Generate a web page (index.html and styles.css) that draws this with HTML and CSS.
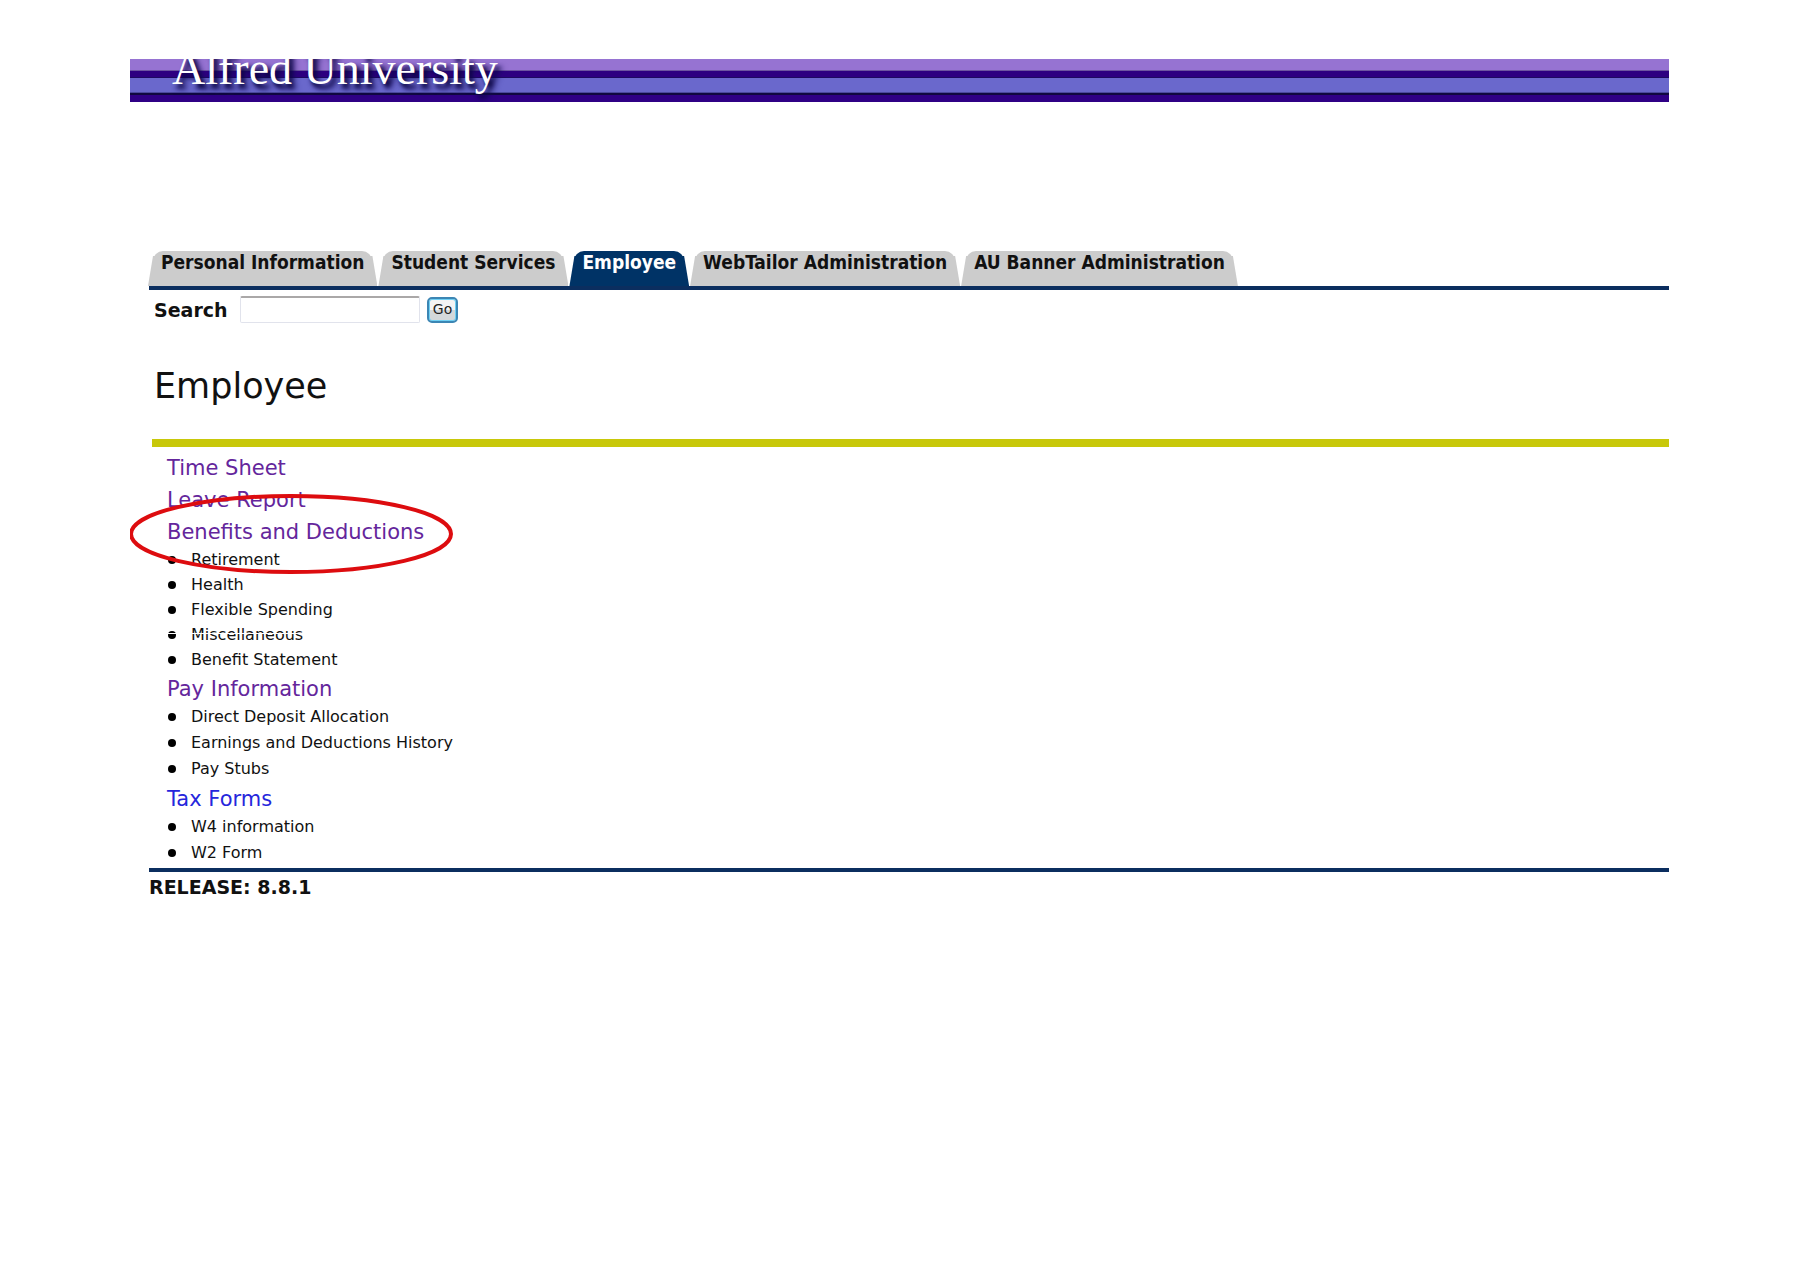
FILE: index.html
```html
<!DOCTYPE html>
<html lang="en">
<head>
<meta charset="utf-8">
<title>Employee - Alfred University</title>
<link rel="stylesheet" href="styles.css">
</head>
<body>
<header class="banner"><span class="wordmark">Alfred University</span></header>
<div class="content">
  <nav class="tabs" aria-label="Main">
    <a class="tab" href="#">Personal Information</a>
    <a class="tab" href="#">Student Services</a>
    <a class="tab tab-active" href="#" aria-current="page">Employee</a>
    <a class="tab" href="#">WebTailor Administration</a>
    <a class="tab" href="#">AU Banner Administration</a>
  </nav>
  <form class="search">
    <label for="q">Search</label>
    <input id="q" type="text">
    <button type="button">Go</button>
  </form>
  <main>
    <h1>Employee</h1>
    <div class="menu">
      <a class="menu-link" href="#">Time Sheet</a>
      <a class="menu-link" href="#">Leave Report</a>
      <div class="highlighted">
        <a class="menu-link" href="#">Benefits and Deductions</a>
        <svg class="ring" width="326" height="84" viewBox="0 0 326 84" aria-hidden="true"><ellipse cx="163" cy="42" rx="160" ry="38" fill="none" stroke="#dd0c0f" stroke-width="4"/></svg>
      </div>
      <ul class="compact">
        <li>Retirement</li>
        <li>Health</li>
        <li>Flexible Spending</li>
        <li class="scanned">Miscellaneous</li>
        <li>Benefit Statement</li>
      </ul>
      <a class="menu-link" href="#">Pay Information</a>
      <ul>
        <li>Direct Deposit Allocation</li>
        <li>Earnings and Deductions History</li>
        <li>Pay Stubs</li>
      </ul>
      <a class="menu-link unvisited" href="#">Tax Forms</a>
      <ul>
        <li>W4 information</li>
        <li>W2 Form</li>
      </ul>
    </div>
  </main>
  <footer>RELEASE: 8.8.1</footer>
</div>
</body>
</html>
```
FILE: styles.css
```css
* { box-sizing: border-box; }
body {
  margin: 59px 131px 0 130px;
  background: #fff;
  color: #111;
  font-family: "DejaVu Sans", Verdana, sans-serif;
}
a { text-decoration: none; }

.banner {
  height: 43px;
  overflow: hidden;
  padding-left: 42px;
  background: linear-gradient(#9673d2 0 11px, #6c55a0 11px 12px, #2d0080 12px 18px, #1e0a60 18px 19px, #6a68cc 19px 33px, #4a4a9c 33px 34px, #100840 34px 36px, #2f0085 36px);
}
.wordmark {
  display: block;
  margin-top: -15px;
  font: 46px/50px "Liberation Serif", serif;
  color: #fff;
  text-shadow: 3px 4px 4px #0a0440, 5px 5px 6px #1a1060;
}

.content { padding: 149px 0 0 19px; }
.tabs {
  display: flex;
  gap: 3px;
  border-bottom: 4px solid #0b2e5f;
}
.tab {
  position: relative;
  z-index: 0;
  height: 35px;
  padding: 0 12px;
  font: bold 19px/22px "DejaVu Sans Condensed", "DejaVu Sans", sans-serif;
  color: #111;
}
.tab::before {
  content: "";
  position: absolute;
  z-index: -1;
  inset: 0 4px;
  background: #ccc;
  border-radius: 10px 10px 0 0;
}
.tab::after {
  content: "";
  position: absolute;
  z-index: -1;
  inset: 5px -1px 0;
  background: #ccc;
  clip-path: polygon(5px 0, calc(100% - 5px) 0, 100% 100%, 0 100%);
}
.tab-active { color: #fff; }
.tab-active::before, .tab-active::after { background: #036; }

.search {
  display: flex;
  align-items: center;
  padding: 6px 0 0 5px;
  font-size: 19px;
}
.search label { font-weight: bold; width: 86px; }
.search input {
  width: 180px;
  height: 27px;
  margin-right: 7px;
  border: 1px solid #e1e3ec;
  border-top: 2px solid #aaa8a8;
  border-radius: 2px;
}
.search button {
  width: 31px;
  height: 26px;
  padding: 0 0 2px;
  border: 2px solid #3c86b4;
  border-radius: 5px;
  background: linear-gradient(#f4f4f4 50%, #d4d8da 50%);
  box-shadow: inset 0 0 0 1px #6fd0f4;
  font: 14px "DejaVu Sans", sans-serif;
  color: #222;
}

main {
  border-bottom: 4px solid #0b2e5f;
}
h1 {
  margin: 0 0 0 3px;
  padding: 41px 0 31px 2px;
  font-size: 35px;
  font-weight: normal;
  line-height: 44px;
  border-bottom: 8px solid #c8c80a;
}
.menu { padding: 5px 0 1px 18px; }
.menu-link {
  display: block;
  font-size: 21px;
  line-height: 32px;
  color: #64269c;
}
.unvisited { color: #2626dc; }
.highlighted { position: relative; }
.ring {
  position: absolute;
  left: -39px;
  top: -24px;
}
ul {
  list-style: none;
  margin: -1px 0 1px;
  padding: 0;
}
li {
  display: flex;
  align-items: center;
  gap: 15px;
  font-size: 16px;
  line-height: 26px;
}
.compact li { line-height: 25px; }
li::before {
  content: "";
  width: 8px;
  height: 8px;
  margin-left: 1px;
  border-radius: 50%;
  background: #000;
}
.scanned { position: relative; }
.scanned::after {
  content: "";
  position: absolute;
  inset: 11px 0 auto;
  height: 1px;
  background: #fff;
}
footer {
  font-size: 19px;
  font-weight: bold;
  line-height: 30px;
}
```
